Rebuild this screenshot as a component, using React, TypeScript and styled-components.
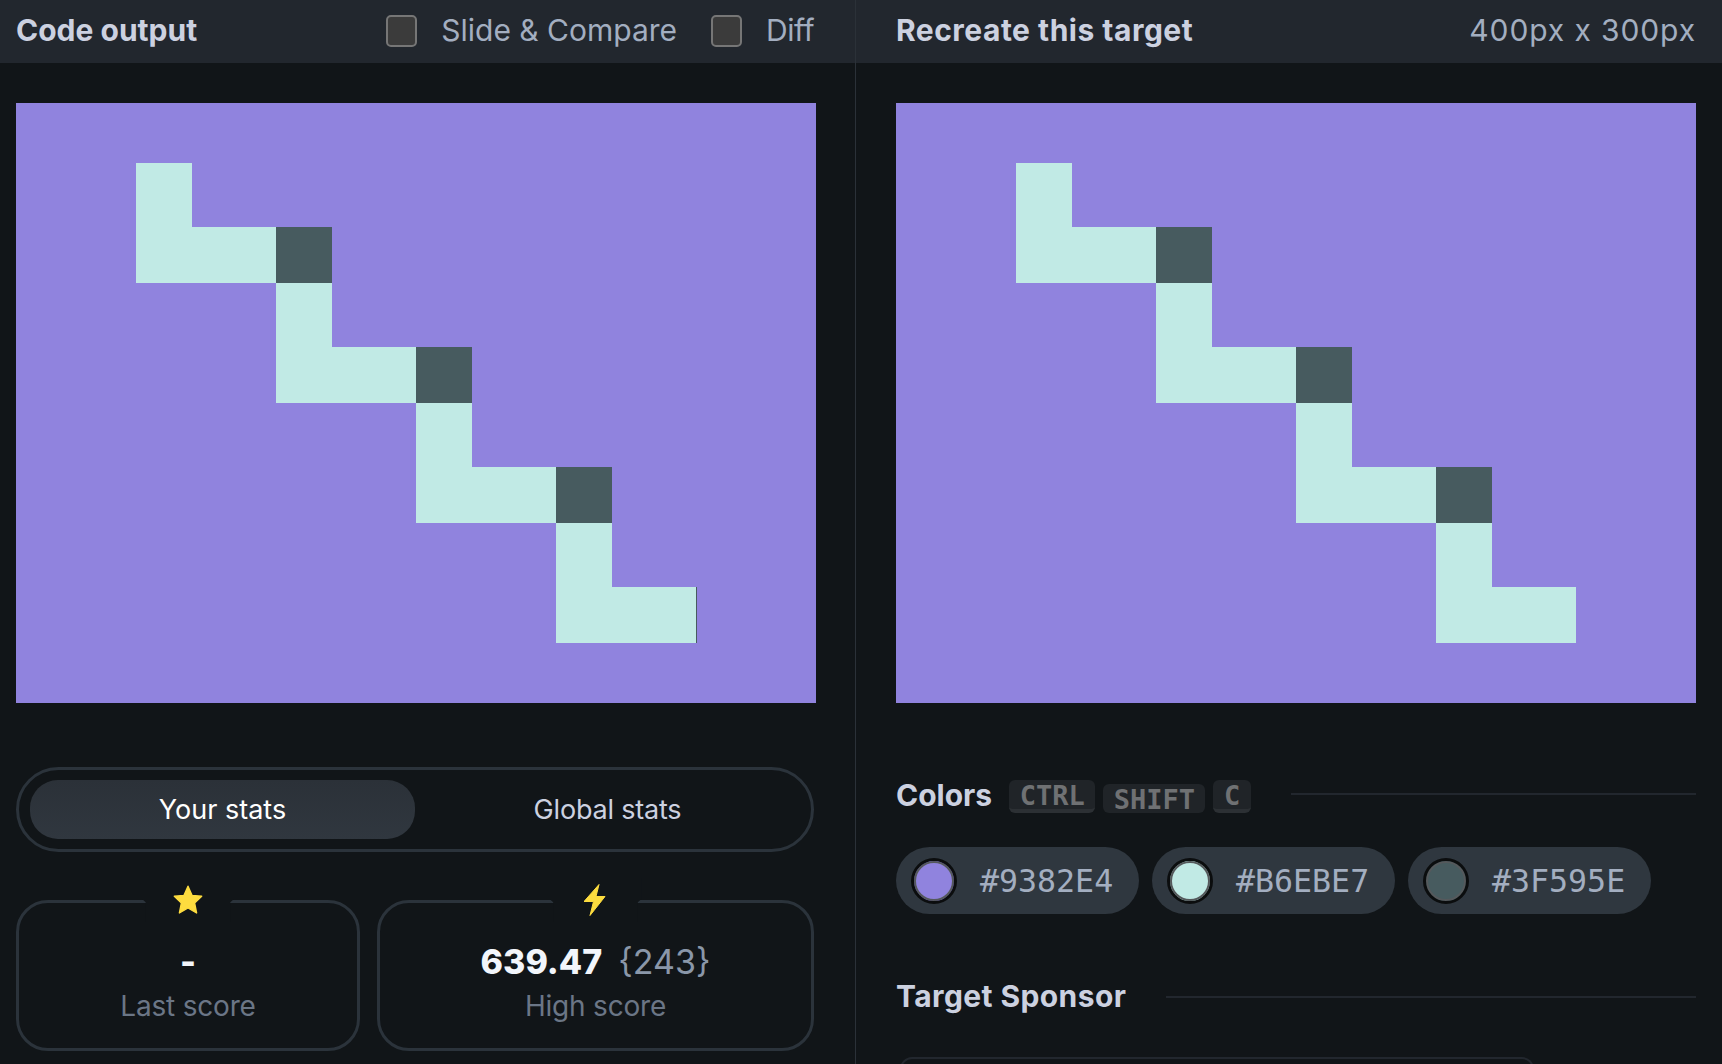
import React from "react";
import styled, {createGlobalStyle} from "styled-components";

const GlobalStyle = createGlobalStyle`
  html, body {
    margin: 0;
    height: 100%;
    overflow: hidden;
    background: #111518;
  }
  * {
    box-sizing: border-box;
  }
`;

const Page = styled.div`
  display: flex;
  width: 1722px;
  height: 1064px;
  overflow: hidden;
  font-family: "Inter", "Liberation Sans", sans-serif;
  background: #111518;
`;

const LeftPanel = styled.div`
  width: 856px;
  flex: none;
  border-right: 1px solid #2b3138;
`;

const RightPanel = styled.div`
  flex: 1;
  min-width: 0;
`;

const Header = styled.div<{$pad: string}>`
  height: 63px;
  display: flex;
  align-items: center;
  padding: ${(p) => p.$pad};
  background: #22272e;
`;

const HeaderTitle = styled.h2<{$track?: number}>`
  margin: 0 0 2px;
  flex: 1;
  font-size: 30px;
  line-height: 34px;
  font-weight: 700;
  letter-spacing: ${(p) => p.$track ?? 0}px;
  color: #ccd1e0;
`;

const HeaderLabel = styled.span<{$track?: number}>`
  margin-bottom: 2px;
  font-size: 30px;
  line-height: 34px;
  letter-spacing: ${(p) => p.$track ?? 0}px;
  color: #a3aec0;
`;

const CheckItem = styled.label<{$gap: number}>`
  display: flex;
  align-items: center;
  gap: 24px;
  margin-left: ${(p) => p.$gap}px;
`;

const CheckBox = styled.span`
  width: 31px;
  height: 32px;
  border: 2px solid #767676;
  border-radius: 5px;
  background: #3b3b3b;
`;

const Stage = styled.div<{$pad: string}>`
  padding: ${(p) => p.$pad};
`;

const Canvas = styled.svg`
  display: block;
  width: 800px;
  height: 600px;
  shape-rendering: crispEdges;
`;

const Toggle = styled.div`
  display: flex;
  height: 85px;
  margin: 64px 2px 0 0;
  padding: 10px 11px;
  border: 3px solid #2b333b;
  border-radius: 43px;
`;

const ToggleOption = styled.div<{$active?: boolean}>`
  flex: 1;
  display: flex;
  align-items: center;
  justify-content: center;
  border-radius: 28px;
  font-size: 27px;
  letter-spacing: ${(p) => (p.$active ? 0 : -0.2)}px;
  color: ${(p) => (p.$active ? "#ffffff" : "#ccd1e0")};
  background: ${(p) => (p.$active ? "linear-gradient(#2b3138, #30373f)" : "none")};
`;

const StatRow = styled.div`
  display: flex;
  gap: 17px;
  margin: 48px 2px 0 0;
`;

const StatCard = styled.div<{$width: number}>`
  position: relative;
  width: ${(p) => p.$width}px;
  height: 151px;
  padding-top: 39px;
  border: 3px solid #2b333b;
  border-radius: 32px;
  text-align: center;
`;

const StatIcon = styled.div`
  position: absolute;
  top: -25px;
  left: 50%;
  width: 92px;
  height: 44px;
  margin-left: -46px;
  display: flex;
  align-items: center;
  justify-content: center;
  background: #111518;
  clip-path: polygon(0 0, 100% 0, 100% 48%, 96% 55%, 96% 100%, 4% 100%, 4% 55%, 0 48%);
`;

const StatValue = styled.div`
  display: flex;
  justify-content: center;
  align-items: baseline;
  gap: 16px;
  height: 40px;
  font-size: 34px;
  line-height: 40px;
  font-weight: 800;
  color: #f2f5fb;
`;

const StatExtra = styled.span`
  font-weight: 400;
  color: #8a97a9;
`;

const StatLabel = styled.div`
  margin-top: 7px;
  font-size: 28px;
  line-height: 34px;
  letter-spacing: -0.2px;
  color: #6b7686;
`;

const SectionHead = styled.div<{$top: number}>`
  display: flex;
  align-items: center;
  margin-top: ${(p) => p.$top}px;
`;

const SectionTitle = styled.h3<{$track?: number}>`
  margin: 0 0 2px;
  font-size: 30px;
  line-height: 32px;
  font-weight: 700;
  letter-spacing: ${(p) => p.$track ?? 0}px;
  color: #ccd1e0;
`;

const Rule = styled.div<{$gap: number; $lift?: number}>`
  flex: 1;
  height: 2px;
  margin-left: ${(p) => p.$gap}px;
  margin-bottom: ${(p) => p.$lift ?? 0}px;
  background: #22272e;
`;

const Keys = styled.div`
  display: flex;
  align-items: flex-end;
  gap: 8px;
  margin: 2px 0 0 17px;
  height: 33px;
`;

const Key = styled.kbd<{$pressed?: boolean}>`
  display: block;
  height: ${(p) => (p.$pressed ? 29 : 33)}px;
  padding: 0 10.5px;
  border-bottom: ${(p) => (p.$pressed ? "0" : "4px solid #2c3034")};
  border-radius: 6px;
  background: #202428;
  font-family: "DejaVu Sans Mono", "Liberation Mono", monospace;
  font-size: 27px;
  line-height: 32px;
  font-weight: 700;
  color: #6f7173;
`;

const ChipRow = styled.div`
  display: flex;
  gap: 13px;
  margin-top: 34px;
`;

const Chip = styled.div`
  width: 243px;
  height: 67px;
  display: flex;
  align-items: center;
  gap: 23px;
  padding-left: 15px;
  border-radius: 34px;
  background: #2f373f;
`;

const Swatch = styled.span<{$color: string}>`
  width: 46px;
  height: 46px;
  border-radius: 50%;
  border: 3px solid #0b0d0e;
  background: ${(p) => p.$color};
  box-shadow: inset 0 0 0 2px #55595c;
`;

const ChipText = styled.span`
  font-family: "DejaVu Sans Mono", "Liberation Mono", monospace;
  font-size: 31.6px;
  color: #a3aec0;
`;

const SponsorBox = styled.div`
  width: 634px;
  height: 120px;
  margin: 43px 0 0 4px;
  border: 2px solid #22272e;
  border-radius: 12px;
`;

const PURPLE = "#9083de";
const MINT = "#c1eae5";
const SLATE = "#475b5f";

const steps = [0, 1, 2, 3];

const TargetArt = ({seam}: {seam?: boolean}) => (
  <Canvas viewBox="0 0 400 300">
    <rect width="400" height="300" fill={PURPLE} />
    {steps.map((i) => (
      <g key={i} transform={`translate(${60 + i * 70} ${30 + i * 60})`} fill={MINT}>
        <rect width="28" height="60" />
        <rect y="32" width="70" height="28" />
      </g>
    ))}
    {steps.slice(0, 3).map((i) => (
      <rect key={i} x={130 + i * 70} y={62 + i * 60} width="28" height="28" fill={SLATE} />
    ))}
    {seam && <rect x="340" y="242" width="0.5" height="28" fill={SLATE} />}
  </Canvas>
);

const Star = () => (
  <svg width="32" height="32" viewBox="0 0 32 32">
    <path
      d="M16 2.2 20 11.4 29.7 12.3 22.6 19 24.6 29 16 24 7.4 29 9.4 19 2.3 12.3 12 11.4Z"
      fill="#fddc3f"
      stroke="#fddc3f"
      strokeWidth="1.4"
      strokeLinejoin="round"
    />
  </svg>
);

const Bolt = () => (
  <svg width="24" height="34" viewBox="1.5 0 24 34">
    <path
      d="M16.5 1.5 1.5 18.5 11 18.5 7.5 32.5 22.5 13.5 13.5 13.5Z"
      fill="#fddc3f"
      stroke="#fddc3f"
      strokeWidth="1"
      strokeLinejoin="round"
    />
  </svg>
);

const colors = [
  {hex: "#9382E4", fill: PURPLE},
  {hex: "#B6EBE7", fill: MINT},
  {hex: "#3F595E", fill: SLATE},
];

export default function App() {
  return (
    <Page>
      <GlobalStyle />
      <LeftPanel>
        <Header $pad="0 41px 2px 16px">
          <HeaderTitle>Code output</HeaderTitle>
          <CheckItem $gap={0}>
            <CheckBox />
            <HeaderLabel>Slide &amp; Compare</HeaderLabel>
          </CheckItem>
          <CheckItem $gap={34}>
            <CheckBox />
            <HeaderLabel $track={-0.5}>Diff</HeaderLabel>
          </CheckItem>
        </Header>
        <Stage $pad="40px 39px 0 16px">
          <TargetArt seam />
          <Toggle>
            <ToggleOption $active>Your stats</ToggleOption>
            <ToggleOption>Global stats</ToggleOption>
          </Toggle>
          <StatRow>
            <StatCard $width={344}>
              <StatIcon>
                <Star />
              </StatIcon>
              <StatValue>-</StatValue>
              <StatLabel>Last score</StatLabel>
            </StatCard>
            <StatCard $width={437}>
              <StatIcon>
                <Bolt />
              </StatIcon>
              <StatValue>
                639.47 <StatExtra>{"{243}"}</StatExtra>
              </StatValue>
              <StatLabel>High score</StatLabel>
            </StatCard>
          </StatRow>
        </Stage>
      </LeftPanel>
      <RightPanel>
        <Header $pad="0 26px 2px 40px">
          <HeaderTitle $track={0.5}>Recreate this target</HeaderTitle>
          <HeaderLabel $track={0.9}>400px x 300px</HeaderLabel>
        </Header>
        <Stage $pad="40px 26px 0 40px">
          <TargetArt />
          <SectionHead $top={75}>
            <SectionTitle>Colors</SectionTitle>
            <Keys>
              <Key>CTRL</Key>
              <Key $pressed>SHIFT</Key>
              <Key>C</Key>
            </Keys>
            <Rule $gap={40} $lift={4} />
          </SectionHead>
          <ChipRow>
            {colors.map((c) => (
              <Chip key={c.hex}>
                <Swatch $color={c.fill} />
                <ChipText>{c.hex}</ChipText>
              </Chip>
            ))}
          </ChipRow>
          <SectionHead $top={66}>
            <SectionTitle $track={0.4}>Target Sponsor</SectionTitle>
            <Rule $gap={40} />
          </SectionHead>
          <SponsorBox />
        </Stage>
      </RightPanel>
    </Page>
  );
}
